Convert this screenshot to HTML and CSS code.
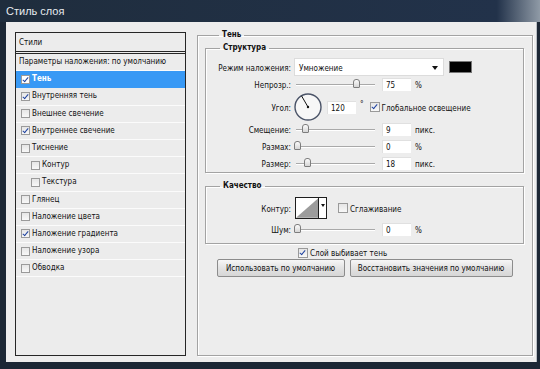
FILE: index.html
```html
<!DOCTYPE html>
<html lang="ru">
<head>
    <meta charset="UTF-8">
    <title>Стиль слоя</title>
    <link rel="stylesheet" href="styles.css">
</head>
<body>
    <div class="window">
        <div class="titlebar">Стиль слоя</div>

        <div class="client">
            <!-- left list of effects -->
            <div class="styles-list">
                <div class="list-head">Стили</div>
                <div class="list-row">Параметры наложения: по умолчанию</div>
                <div class="list-row selected"><span class="check on"></span>Тень</div>
                <div class="list-row"><span class="check on"></span>Внутренняя тень</div>
                <div class="list-row"><span class="check"></span>Внешнее свечение</div>
                <div class="list-row"><span class="check on"></span>Внутреннее свечение</div>
                <div class="list-row"><span class="check"></span>Тиснение</div>
                <div class="list-row sub"><span class="check"></span>Контур</div>
                <div class="list-row sub"><span class="check"></span>Текстура</div>
                <div class="list-row"><span class="check"></span>Глянец</div>
                <div class="list-row"><span class="check"></span>Наложение цвета</div>
                <div class="list-row"><span class="check on"></span>Наложение градиента</div>
                <div class="list-row"><span class="check"></span>Наложение узора</div>
                <div class="list-row"><span class="check"></span>Обводка</div>
            </div>

            <div class="settings">
                <fieldset class="group outer">
                    <legend>Тень</legend>

                    <fieldset class="group structure">
                        <legend>Структура</legend>

                        <div class="row row-blend">
                            <span class="label">Режим наложения:</span>
                            <div class="select">Умножение<span class="arrow"></span></div>
                            <span class="swatch"></span>
                        </div>

                        <div class="row row-opacity">
                            <span class="label">Непрозр.:</span>
                            <div class="slider"><span class="thumb" style="left: 59px"></span></div>
                            <span class="field">75</span>
                            <span class="unit">%</span>
                        </div>

                        <div class="row row-angle">
                            <span class="label">Угол:</span>
                            <svg class="dial" width="28" height="28" viewBox="0 0 28 28">
                                <circle cx="14" cy="14" r="13" fill="#f7f7f7" stroke="#4b5468" stroke-width="1.4"/>
                                <line x1="14" y1="14" x2="7.5" y2="2.8" stroke="#111" stroke-width="1"/>
                                <circle cx="14" cy="14" r="1.2" fill="#111"/>
                            </svg>
                            <span class="field">120</span>
                            <span class="degree">°</span>
                            <span class="check on"></span>
                            <span class="check-text">Глобальное освещение</span>
                        </div>

                        <div class="row row-offset">
                            <span class="label">Смещение:</span>
                            <div class="slider"><span class="thumb" style="left: 8px"></span></div>
                            <span class="field">9</span>
                            <span class="unit">пикс.</span>
                        </div>

                        <div class="row row-spread">
                            <span class="label">Размах:</span>
                            <div class="slider"><span class="thumb" style="left: 0px"></span></div>
                            <span class="field">0</span>
                            <span class="unit">%</span>
                        </div>

                        <div class="row row-size">
                            <span class="label">Размер:</span>
                            <div class="slider"><span class="thumb" style="left: 10px"></span></div>
                            <span class="field">18</span>
                            <span class="unit">пикс.</span>
                        </div>
                    </fieldset>

                    <fieldset class="group quality">
                        <legend>Качество</legend>

                        <div class="row row-contour">
                            <span class="label">Контур:</span>
                            <div class="contour">
                                <svg class="curve" width="23" height="20" viewBox="0 0 23 20">
                                    <polygon points="0,20 23,0 23,20" fill="#9c9c9c"/>
                                </svg>
                                <span class="contour-drop"><span class="arrow"></span></span>
                            </div>
                            <span class="check"></span>
                            <span class="check-text">Сглаживание</span>
                        </div>

                        <div class="row row-noise">
                            <span class="label">Шум:</span>
                            <div class="slider"><span class="thumb" style="left: 0px"></span></div>
                            <span class="field">0</span>
                            <span class="unit">%</span>
                        </div>
                    </fieldset>

                    <div class="knockout">
                        <span class="check on"></span>
                        <span class="check-text">Слой выбивает тень</span>
                    </div>

                    <div class="buttons">
                        <button class="btn btn-default">Использовать по умолчанию</button>
                        <button class="btn btn-reset">Восстановить значения по умолчанию</button>
                    </div>
                </fieldset>
            </div>
        </div>
    </div>
</body>
</html>
```

FILE: styles.css
```css
body {
    margin: 0;
    background: #1c2735;
    font-family: "DejaVu Sans Condensed", "DejaVu Sans", sans-serif;
    font-stretch: condensed;
    font-size: 8px;
    color: #111;
}
.window {
    width: 540px;
    height: 369px;
    display: flex;
    flex-direction: column;
    background: #1c2735;
}
.titlebar {
    height: 22px;
    line-height: 23px;
    padding-left: 6px;
    font-family: "Liberation Sans", sans-serif;
    font-stretch: normal;
    font-size: 11px;
    color: #e8ecf0;
    background: linear-gradient(to right, #1f2d3d 0, #22324a 92%, #8f9aa6 100%);
}
.client {
    width: 531px;
    height: 340px;
    margin-left: 6px;
    box-sizing: border-box;
    padding: 7px 0 0 9px;
    display: flex;
    background: #ededed;
    border-right: 1px solid #b9bec4;
}

/* left list */
.styles-list {
    width: 171px;
    height: 324px;
    margin-top: 3px;
    box-sizing: border-box;
    border: 1px solid #262626;
    background: #ececec;
}
.list-head {
    height: 18px;
    line-height: 20px;
    padding-left: 3px;
    border-bottom: 3px double #262626;
}
.list-row {
    height: 16.2px;
    box-sizing: content-box;
    padding-left: 3px;
    border-bottom: 1px solid #fbfbfb;
    display: flex;
    align-items: center;
    white-space: nowrap;
    line-height: 18px;
}
.list-row .check {
    margin: 0 2px 0 2px;
}
.list-row.sub {
    padding-left: 13px;
}
.list-row.selected {
    background: #3899f5;
    color: #fff;
    font-weight: bold;
    border-bottom-color: #3899f5;
}
.list-row.selected .check {
    background: #fff;
}

/* checkboxes */
.check {
    width: 9px;
    height: 9px;
    flex: none;
    position: relative;
    box-sizing: border-box;
    border: 1px solid #9a9a9a;
    background: linear-gradient(#e6e6e6, #f8f8f8);
}
.check.on::after {
    content: "";
    position: absolute;
    left: 2px;
    top: 0px;
    width: 2px;
    height: 5px;
    border: solid #1f43a0;
    border-width: 0 1.5px 1.5px 0;
    transform: rotate(40deg);
}
.check-text {
    margin-left: 2px;
    padding-top: 2px;
    white-space: nowrap;
}

/* right side */
.settings {
    margin-left: 11px;
}
.group {
    margin: 0;
    padding: 0;
    min-inline-size: 0;
    border: 1px solid #a3a3a3;
    box-shadow: 1px 1px 0 #fff, inset 1px 1px 0 #fff;
}
.group legend {
    padding: 0 3px;
    margin-left: 14px;
    line-height: 12px;
    font-weight: bold;
}
.outer {
    width: 336px;
    height: 327px;
    box-sizing: border-box;
    padding: 1px 8px 0 7px;
}
.structure {
    padding: 4px 0 2px 0;
}
.quality {
    margin-top: 7px;
    padding: 5px 0 7px 0;
}
.row {
    display: flex;
    align-items: center;
    height: 14px;
}
.label {
    width: 85px;
    margin-right: 3px;
    padding-top: 2px;
    text-align: right;
    flex: none;
    white-space: nowrap;
}
.row-blend { height: 18px; }
.row-opacity { margin-top: 1px; }
.row-angle { height: 28px; margin-top: 2px; }
.row-offset { margin-top: 1px; }
.row-spread, .row-size { margin-top: 3px; }
.row-contour { height: 22px; }
.row-noise { margin-top: 3px; }

.select {
    width: 150px;
    height: 18px;
    line-height: 19px;
    box-sizing: border-box;
    padding-left: 4px;
    background: #fff;
    border: 1px solid #dcdcdc;
    position: relative;
}
.arrow {
    position: absolute;
    right: 3px;
    top: 7px;
    border-left: 3px solid transparent;
    border-right: 3px solid transparent;
    border-top: 4px solid #111;
}
.select .arrow {
    right: 5px;
}
.swatch {
    width: 23px;
    height: 12px;
    margin-left: 5px;
    box-sizing: border-box;
    background: #000;
    border: 1px solid #777;
}
.slider {
    width: 81px;
    height: 14px;
    position: relative;
    flex: none;
}
.slider::before {
    content: "";
    position: absolute;
    left: 2px;
    right: 0;
    top: 7px;
    border-top: 1px solid #a9a9a9;
    border-bottom: 1px solid #fff;
}
.thumb {
    position: absolute;
    top: 2px;
    width: 7px;
    height: 9px;
    box-sizing: border-box;
    border: 1px solid #7d7d7d;
    border-radius: 3px 3px 1px 1px;
    background: linear-gradient(#fbfbfb, #d6d6d6);
}
.field {
    width: 29px;
    height: 13px;
    line-height: 14px;
    margin-left: 7px;
    padding-left: 3px;
    box-sizing: border-box;
    background: #fff;
    border-top: 1px solid #e0e0e0;
    border-left: 1px solid #e0e0e0;
    flex: none;
}
.unit {
    margin-left: 4px;
    padding-top: 2px;
}
.dial {
    flex: none;
}
.row-angle .field {
    margin-left: 5px;
}
.degree {
    margin: 0 6px 0 4px;
    align-self: flex-start;
    padding-top: 7px;
}
.contour {
    width: 32px;
    height: 22px;
    margin-left: 1px;
    box-sizing: border-box;
    border: 1px solid #1e1e1e;
    background: #fff;
    display: flex;
}
.curve {
    display: block;
}
.contour-drop {
    width: 7px;
    border-left: 1px solid #1e1e1e;
    position: relative;
}
.contour-drop .arrow {
    right: 1px;
    top: 6px;
    border-left-width: 2px;
    border-right-width: 2px;
    border-top-width: 3px;
}
.row-contour .check {
    margin-left: 11px;
    width: 10px;
    height: 10px;
}
.row-angle .check {
    width: 10px;
    height: 10px;
}
.knockout {
    display: flex;
    align-items: center;
    height: 11px;
    margin-top: 3px;
    padding-left: 93px;
}
.knockout .check {
    width: 10px;
    height: 10px;
}
.buttons {
    display: flex;
    justify-content: center;
    gap: 5px;
    margin-top: 1px;
}
.btn {
    height: 18px;
    padding: 1px 0 0;
    font: inherit;
    color: #111;
    border: 1px solid #8c8c8c;
    border-radius: 2px;
    background: linear-gradient(#f7f7f7, #e3e3e3 50%, #d6d6d6);
}
.btn-default { width: 128px; }
.btn-reset { width: 163px; }
```
